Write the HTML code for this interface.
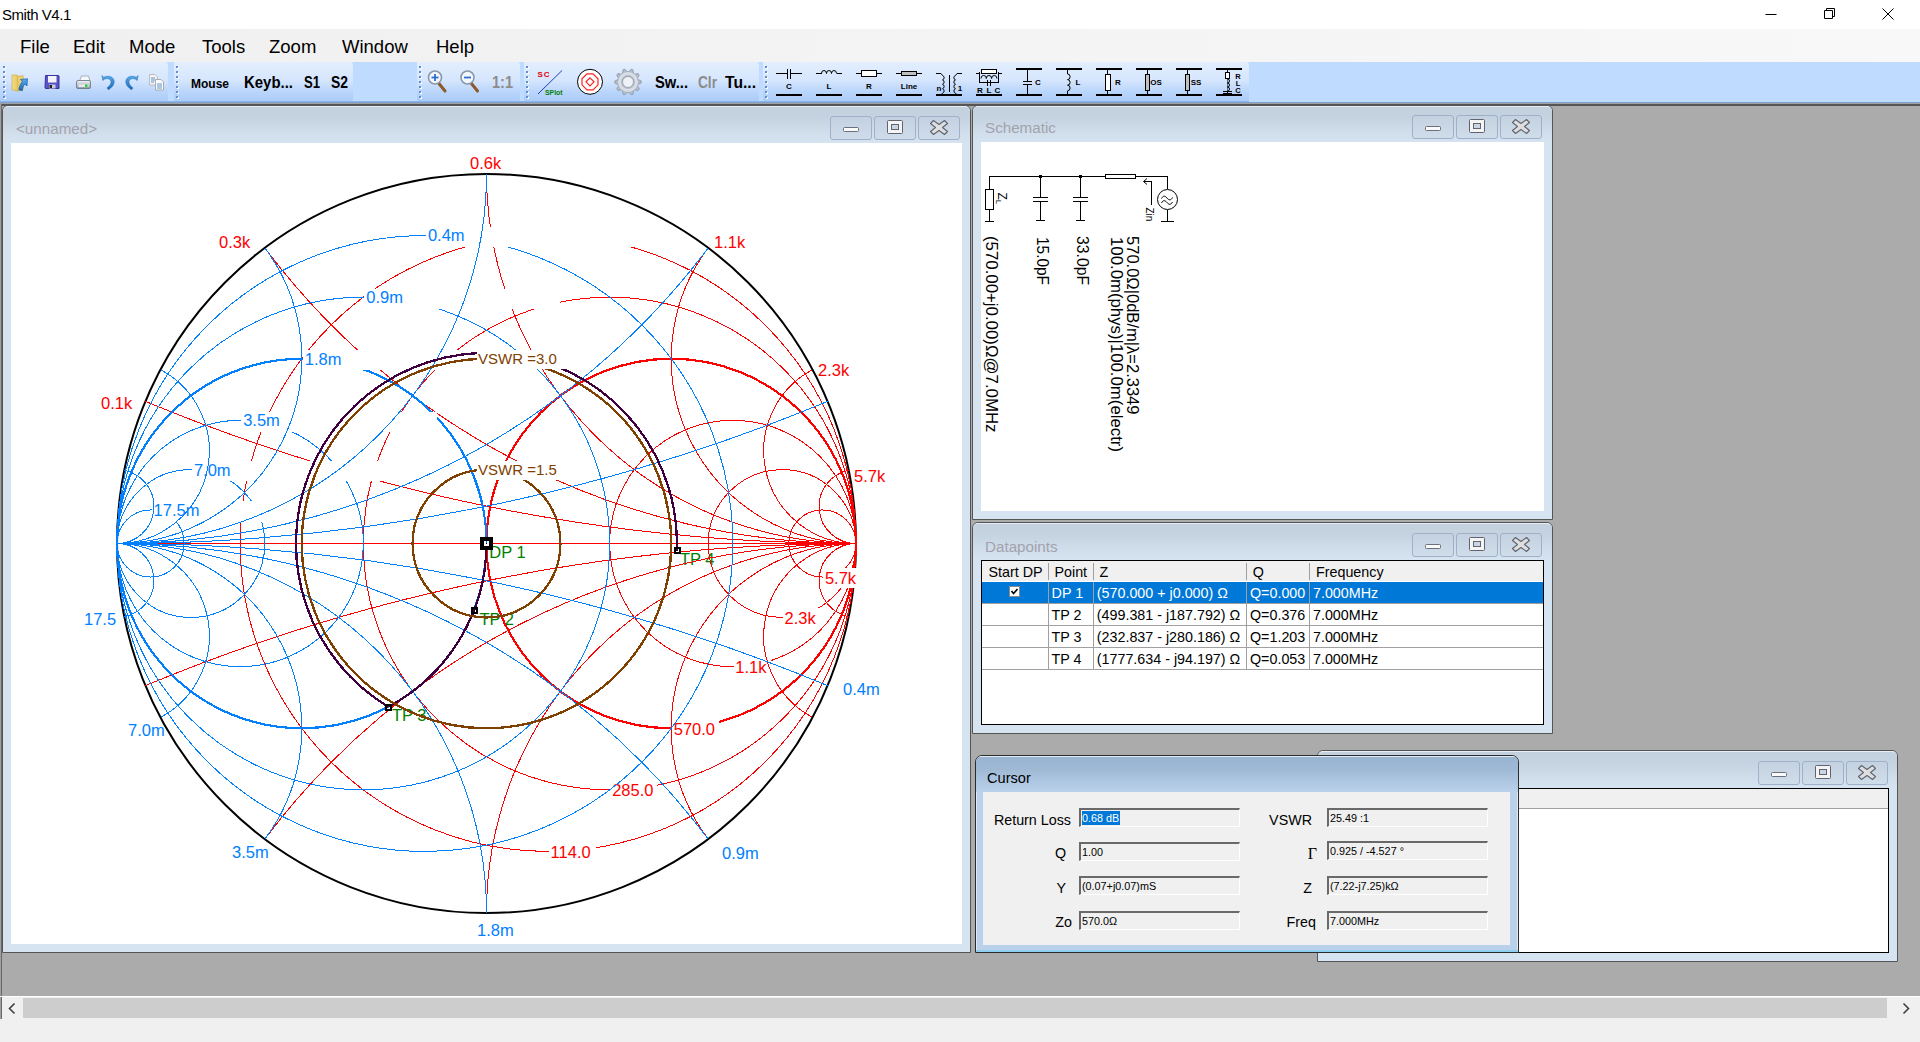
<!DOCTYPE html>
<html><head><meta charset="utf-8"><title>Smith V4.1</title>
<style>
*{box-sizing:border-box;margin:0;padding:0}
html,body{width:1920px;height:1042px;overflow:hidden;background:#fff;font-family:"Liberation Sans",sans-serif;color:#000}
.abs{position:absolute}
#titlebar{position:absolute;left:0;top:0;width:1920px;height:29px;background:#fff}
#titlebar .t{position:absolute;left:2px;top:5px;font-size:15px;line-height:20px;letter-spacing:-0.45px}
#menubar{position:absolute;left:0;top:29px;width:1920px;height:33px;background:linear-gradient(90deg,#f0f0f0 0%,#f2f2f2 30%,#f8f8f8 100%)}
#menubar span{position:absolute;top:6px;font-size:18.5px;line-height:24px}
#toolbar{position:absolute;left:0;top:62px;width:1920px;height:41px;background:#bfdbff}
.band{position:absolute;top:0;height:40px;background:linear-gradient(#e3efff 0%,#d6e6fd 45%,#b9d5fb 75%,#a9cbf8 100%);border-radius:0 3px 3px 0}
.grip{position:absolute;top:5px;width:3px;height:30px;background:repeating-linear-gradient(#5f8fd0 0,#5f8fd0 2px,transparent 2px,transparent 4px)}
.tbt{position:absolute;font-weight:bold;font-size:14.5px;line-height:18px;top:11px;color:#000}
#mdi{position:absolute;left:0;top:103px;width:1920px;height:893px;background:#ababab;border-top:1px solid #a0a0a0;border-left:1px solid #a0a0a0}
#mdi:before{content:"";position:absolute;left:0;top:0;right:0;height:2px;background:#555}
#mdi:after{content:"";position:absolute;left:0;top:0;bottom:0;width:1px;background:#696969}
.win{position:absolute;background:#d6e3f1;border:1px solid #555;border-radius:6px 6px 0 0;overflow:hidden}
.win .tb{position:absolute;left:0;top:0;right:0;height:37px;background:linear-gradient(#c3d0de 0%,#c5d2e0 30%,#d0ddeb 70%,#d6e3f1 100%);border-top:1px solid #e8eef6;border-radius:5px 5px 0 0}
.win .ttl{position:absolute;left:13px;top:13px;font-size:15.2px;line-height:20px;color:#a3a3ad}
.win .cl{position:absolute;background:#fff}
.cb{position:absolute;width:42px;height:24px;border:1px solid #9fb0c8;border-radius:3px;background:linear-gradient(#c4d1e0,#cfdcea)}
.cb svg{position:absolute;left:0;top:0}
#hscroll{position:absolute;left:0;top:996px;width:1920px;height:23px;background:#f0f0f0;border-top:1px solid #fff}
#hscroll .th{position:absolute;left:23px;top:1px;width:1864px;height:20px;background:#cdcdcd}
#status{position:absolute;left:0;top:1019px;width:1920px;height:23px;background:#f0f0f0}
table.lv{border-collapse:collapse;position:absolute;left:0;top:0;font-size:14.5px}
.lvc{position:absolute;font-size:14.3px;line-height:19px;white-space:nowrap}
.fld{position:absolute;height:19px;width:161px;border-top:2px solid #696969;border-left:2px solid #696969;border-right:1px solid #fff;border-bottom:1px solid #fff;box-shadow:inset 0 0 0 0 #000;background:#f0f0f0;font-size:10.8px;line-height:15px;padding:0.5px 0 0 1px;white-space:nowrap}
.lab{position:absolute;font-size:14.3px;line-height:18px;white-space:nowrap;text-align:right}
</style></head><body>
<div id="titlebar"><div class="t">Smith V4.1</div>
<svg class="abs" style="left:1750px;top:0" width="170" height="29" fill="none" stroke="#000" stroke-width="1"><path d="M15.5 14.5h11"/><path d="M74.5 10.5h8v8h-8zM76.500 10.500v-2h8v8h-2"/><path d="M132.5 8.500l11 11m0-11l-11 11"/></svg>
</div>
<div id="menubar"><span style="left:20px">File</span><span style="left:73px">Edit</span><span style="left:129px">Mode</span><span style="left:202px">Tools</span><span style="left:269px">Zoom</span><span style="left:342px">Window</span><span style="left:436px">Help</span></div>
<div id="toolbar">
<div class="band" style="left:0px;width:168px"></div>
<div class="band" style="left:174px;width:179px"></div>
<div class="band" style="left:417px;width:103px"></div>
<div class="band" style="left:524px;width:235px"></div>
<div class="band" style="left:763px;width:486px"></div>
<div style="position:absolute;left:0;top:39px;width:1249px;height:1px;background:#8db3ea"></div>
<div style="position:absolute;left:0;top:40px;width:1920px;height:1px;background:#7da2ce"></div>
<svg class="abs" style="left:0;top:0" width="1920" height="41" font-family="Liberation Sans,sans-serif">
<defs><linearGradient id="gy" x1="0" y1="0" x2="1" y2="0"><stop offset="0" stop-color="#f3dc8b"/><stop offset="1" stop-color="#d9b23c"/></linearGradient><linearGradient id="gb" x1="0" y1="0" x2="0" y2="1"><stop offset="0" stop-color="#5aaef0"/><stop offset="1" stop-color="#1668b8"/></linearGradient><linearGradient id="gs" x1="0" y1="0" x2="0" y2="1"><stop offset="0" stop-color="#f4f6fa"/><stop offset="1" stop-color="#8f98a8"/></linearGradient><radialGradient id="gg"><stop offset="0.5" stop-color="#e8ecf2"/><stop offset="1" stop-color="#9aa4b4"/></radialGradient></defs>
<rect x="4" y="5" width="2" height="2" fill="#fff"/><rect x="3" y="4" width="2" height="2" fill="#5f8fd0"/>
<rect x="4" y="10" width="2" height="2" fill="#fff"/><rect x="3" y="9" width="2" height="2" fill="#5f8fd0"/>
<rect x="4" y="15" width="2" height="2" fill="#fff"/><rect x="3" y="14" width="2" height="2" fill="#5f8fd0"/>
<rect x="4" y="20" width="2" height="2" fill="#fff"/><rect x="3" y="19" width="2" height="2" fill="#5f8fd0"/>
<rect x="4" y="25" width="2" height="2" fill="#fff"/><rect x="3" y="24" width="2" height="2" fill="#5f8fd0"/>
<rect x="4" y="30" width="2" height="2" fill="#fff"/><rect x="3" y="29" width="2" height="2" fill="#5f8fd0"/>
<rect x="4" y="35" width="2" height="2" fill="#fff"/><rect x="3" y="34" width="2" height="2" fill="#5f8fd0"/>
<rect x="177" y="5" width="2" height="2" fill="#fff"/><rect x="176" y="4" width="2" height="2" fill="#5f8fd0"/>
<rect x="177" y="10" width="2" height="2" fill="#fff"/><rect x="176" y="9" width="2" height="2" fill="#5f8fd0"/>
<rect x="177" y="15" width="2" height="2" fill="#fff"/><rect x="176" y="14" width="2" height="2" fill="#5f8fd0"/>
<rect x="177" y="20" width="2" height="2" fill="#fff"/><rect x="176" y="19" width="2" height="2" fill="#5f8fd0"/>
<rect x="177" y="25" width="2" height="2" fill="#fff"/><rect x="176" y="24" width="2" height="2" fill="#5f8fd0"/>
<rect x="177" y="30" width="2" height="2" fill="#fff"/><rect x="176" y="29" width="2" height="2" fill="#5f8fd0"/>
<rect x="177" y="35" width="2" height="2" fill="#fff"/><rect x="176" y="34" width="2" height="2" fill="#5f8fd0"/>
<rect x="420" y="5" width="2" height="2" fill="#fff"/><rect x="419" y="4" width="2" height="2" fill="#5f8fd0"/>
<rect x="420" y="10" width="2" height="2" fill="#fff"/><rect x="419" y="9" width="2" height="2" fill="#5f8fd0"/>
<rect x="420" y="15" width="2" height="2" fill="#fff"/><rect x="419" y="14" width="2" height="2" fill="#5f8fd0"/>
<rect x="420" y="20" width="2" height="2" fill="#fff"/><rect x="419" y="19" width="2" height="2" fill="#5f8fd0"/>
<rect x="420" y="25" width="2" height="2" fill="#fff"/><rect x="419" y="24" width="2" height="2" fill="#5f8fd0"/>
<rect x="420" y="30" width="2" height="2" fill="#fff"/><rect x="419" y="29" width="2" height="2" fill="#5f8fd0"/>
<rect x="420" y="35" width="2" height="2" fill="#fff"/><rect x="419" y="34" width="2" height="2" fill="#5f8fd0"/>
<rect x="527" y="5" width="2" height="2" fill="#fff"/><rect x="526" y="4" width="2" height="2" fill="#5f8fd0"/>
<rect x="527" y="10" width="2" height="2" fill="#fff"/><rect x="526" y="9" width="2" height="2" fill="#5f8fd0"/>
<rect x="527" y="15" width="2" height="2" fill="#fff"/><rect x="526" y="14" width="2" height="2" fill="#5f8fd0"/>
<rect x="527" y="20" width="2" height="2" fill="#fff"/><rect x="526" y="19" width="2" height="2" fill="#5f8fd0"/>
<rect x="527" y="25" width="2" height="2" fill="#fff"/><rect x="526" y="24" width="2" height="2" fill="#5f8fd0"/>
<rect x="527" y="30" width="2" height="2" fill="#fff"/><rect x="526" y="29" width="2" height="2" fill="#5f8fd0"/>
<rect x="527" y="35" width="2" height="2" fill="#fff"/><rect x="526" y="34" width="2" height="2" fill="#5f8fd0"/>
<rect x="766" y="5" width="2" height="2" fill="#fff"/><rect x="765" y="4" width="2" height="2" fill="#5f8fd0"/>
<rect x="766" y="10" width="2" height="2" fill="#fff"/><rect x="765" y="9" width="2" height="2" fill="#5f8fd0"/>
<rect x="766" y="15" width="2" height="2" fill="#fff"/><rect x="765" y="14" width="2" height="2" fill="#5f8fd0"/>
<rect x="766" y="20" width="2" height="2" fill="#fff"/><rect x="765" y="19" width="2" height="2" fill="#5f8fd0"/>
<rect x="766" y="25" width="2" height="2" fill="#fff"/><rect x="765" y="24" width="2" height="2" fill="#5f8fd0"/>
<rect x="766" y="30" width="2" height="2" fill="#fff"/><rect x="765" y="29" width="2" height="2" fill="#5f8fd0"/>
<rect x="766" y="35" width="2" height="2" fill="#fff"/><rect x="765" y="34" width="2" height="2" fill="#5f8fd0"/>
<path d="M12 13h5l1 1.500h5v13l-5 1.500-6-1z" fill="url(#gy)" stroke="#c9a43a" stroke-width=".6"/><path d="M17.500 14.500l5.500-1v13.500l-5 1.500z" fill="#e9cf73" stroke="#c9a43a" stroke-width=".5"/>
<path d="M20.500 17.500l7-.8-.5 7.300-2-2c-1.500 1.500-2.500 3.500-2.700 6.700l-3.500-1c.5-3.500 2-6.500 3.700-8.300z" fill="url(#gb)" stroke="#0f4f9a" stroke-width=".6"/>
<path d="M45.500 13.500h13l.5.500v12.500h-13.500l-.5-.5z" fill="#5a52c8" stroke="#3a3399" stroke-width="1"/><rect x="48" y="14" width="8.500" height="6.500" fill="#f2f2f8"/><rect x="49" y="22.500" width="6.500" height="4" fill="#c9c9d8"/><rect x="49.500" y="23" width="2.500" height="3" fill="#222"/>
<path d="M79.500 19l2-5h7l1.500 5z" fill="#f6f7f9" stroke="#8a93a3" stroke-width=".7"/><rect x="76.500" y="18.500" width="14" height="8" rx="1.500" fill="url(#gs)" stroke="#66707f" stroke-width=".8"/><rect x="78.500" y="22.500" width="10" height="2.500" fill="#e7ebf0"/><rect x="85" y="22.500" width="2.500" height="2.500" fill="#22d422"/>
<path d="M102 13.500l.8 5 1.600-1.300c3.500-1.500 6.600 0 6.600 3 0 2-1.700 3.800-4 5.800l1.600 1.800c3.500-2.600 5.600-5 5.600-8 0-4.800-5.500-7-10.500-4.500z" fill="url(#gb)" stroke="#1c66b0" stroke-width=".5"/>
<path d="M138 13.500l-.8 5-1.600-1.300c-3.500-1.500-6.600 0-6.600 3 0 2 1.700 3.800 4 5.800l-1.600 1.800c-3.500-2.600-5.600-5-5.600-8 0-4.800 5.500-7 10.500-4.500z" fill="url(#gb)" stroke="#1c66b0" stroke-width=".5"/>
<path d="M149.500 12.500h5.500l2.500 2.500v8h-8z" fill="#f4f4f4" stroke="#b0b0b0" stroke-width=".8"/><path d="M155.500 17.500h5.500l2.500 2.500v8h-8z" fill="#fafafa" stroke="#9a9a9a" stroke-width=".8"/>
<path d="M151 16h4m-4 2h4m-4 2h3M157 22h5m-5 2h5m-5 2h5" stroke="#3a78c8" stroke-width=".8"/>
<text x="191" y="25.500" font-size="12" font-weight="bold" textLength="38" lengthAdjust="spacingAndGlyphs">Mouse</text>
<text x="244" y="26.300" font-size="16" font-weight="bold" textLength="49" lengthAdjust="spacingAndGlyphs">Keyb...</text>
<text x="304" y="26.300" font-size="16" font-weight="bold" textLength="16" lengthAdjust="spacingAndGlyphs">S1</text>
<text x="331" y="26.300" font-size="16" font-weight="bold" textLength="17" lengthAdjust="spacingAndGlyphs">S2</text>
<path d="M438.5 21l6.500 8" stroke="#8a5a2a" stroke-width="3" stroke-linecap="round"/>
<circle cx="435" cy="15.500" r="6.500" fill="#f2f7fd" stroke="#8a97a8" stroke-width="1.600"/>
<path d="M431.5 15.500h7" stroke="#2f6fd0" stroke-width="1.800"/>
<path d="M435 12v7" stroke="#2f6fd0" stroke-width="1.800"/>
<path d="M471.0 21l6.500 8" stroke="#8a5a2a" stroke-width="3" stroke-linecap="round"/>
<circle cx="467.5" cy="15.500" r="6.500" fill="#f2f7fd" stroke="#8a97a8" stroke-width="1.600"/>
<path d="M464.0 15.500h7" stroke="#2f6fd0" stroke-width="1.800"/>
<text x="492" y="26.300" font-size="16" font-weight="bold" fill="#8c8c8c" textLength="21" lengthAdjust="spacingAndGlyphs">1:1</text>
<path d="M538 32l24-23.500" stroke="#2040c0" stroke-width="1"/>
<text x="537.500" y="14.500" font-size="8" font-weight="bold" fill="#e00000" letter-spacing="1">SC</text>
<text x="545" y="32.500" font-size="7.500" font-weight="bold" fill="#008000" textLength="17.500" lengthAdjust="spacingAndGlyphs">SPlot</text>
<circle cx="590" cy="19.800" r="12.500" fill="#fff" stroke="#000" stroke-width="1"/>
<path d="M587 11.800h6l5 5v6l-5 5h-6l-5-5v-6z" fill="none" stroke="#ff2020" stroke-width="1.200"/><path d="M590 15.800l4 4-4 4-4-4z" fill="none" stroke="#ff2020" stroke-width="1.200"/>
<path d="M641.2 18.9L641.2 21.0L638.0 22.4L637.5 23.9L639.3 26.9L638.0 28.6L634.7 27.8L633.4 28.8L633.1 32.2L631.1 32.8L628.8 30.3L627.2 30.3L624.9 32.8L623.0 32.2L622.6 28.8L621.3 27.8L618.0 28.6L616.8 26.9L618.5 24.0L618.0 22.4L614.8 21.1L614.8 19.0L618.0 17.6L618.5 16.1L616.7 13.1L618.0 11.4L621.3 12.2L622.6 11.2L622.9 7.8L624.9 7.2L627.2 9.7L628.8 9.7L631.1 7.2L633.0 7.8L633.4 11.2L634.7 12.2L638.0 11.4L639.2 13.1L637.5 16.0L638.0 17.6z" fill="#b4bcc8" stroke="#8d97a6" stroke-width=".8"/>
<circle cx="628" cy="20" r="8.500" fill="none" stroke="#d9dee6" stroke-width="3"/><circle cx="628" cy="20" r="5.500" fill="#eef2f8" stroke="#8d97a6" stroke-width=".8"/>
<text x="655" y="26.300" font-size="16" font-weight="bold" textLength="33" lengthAdjust="spacingAndGlyphs">Sw...</text>
<text x="698" y="26.300" font-size="16" font-weight="bold" fill="#8c8c8c" textLength="19" lengthAdjust="spacingAndGlyphs">Clr</text>
<text x="725" y="26.300" font-size="16" font-weight="bold" textLength="31" lengthAdjust="spacingAndGlyphs">Tu...</text>
<g shape-rendering="crispEdges" stroke="#000" fill="none" font-weight="bold" font-size="8">
<path d="M776 33h26" stroke-width="2"/>
<path d="M816 33h26" stroke-width="2"/>
<path d="M856 33h26" stroke-width="2"/>
<path d="M896 33h26" stroke-width="2"/>
<path d="M936 33h26" stroke-width="2"/>
<path d="M976 33h26" stroke-width="2"/>
<path d="M1016 33h26" stroke-width="2"/>
<path d="M1016 7h26" stroke-width="2"/>
<path d="M1056 33h26" stroke-width="2"/>
<path d="M1056 7h26" stroke-width="2"/>
<path d="M1096 33h26" stroke-width="2"/>
<path d="M1096 7h26" stroke-width="2"/>
<path d="M1136 33h26" stroke-width="2"/>
<path d="M1136 7h26" stroke-width="2"/>
<path d="M1176 33h26" stroke-width="2"/>
<path d="M1176 7h26" stroke-width="2"/>
<path d="M1216 33h26" stroke-width="2"/>
<path d="M1216 7h26" stroke-width="2"/>
<path d="M776 11.500h11m3 0h12M787.5 7v10m3-10v10"/>
<text x="789" y="27" stroke="none" fill="#000" text-anchor="middle">C</text>
<path d="M816 11.500h5.500m15 0h5.500" /><path d="M821.5 11.500a2.500 3 0 0 1 5 0a2.500 3 0 0 1 5 0a2.500 3 0 0 1 5 0" shape-rendering="auto"/>
<text x="829" y="27" stroke="none" fill="#000" text-anchor="middle">L</text>
<path d="M856 11.500h5m16 0h5"/><rect x="861.5" y="8.500" width="15" height="6" fill="#fff"/>
<text x="869" y="27" stroke="none" fill="#000" text-anchor="middle">R</text>
<path d="M896 11.500h5m16 0h5"/><rect x="901.5" y="9.500" width="15" height="4" fill="#c0c0c0"/>
<text x="909" y="27" stroke="none" fill="#000" text-anchor="middle">Line</text>
<g shape-rendering="auto"><path d="M936 11.500h5l1.500 2a2.300 2.300 0 0 1 0 4.400a2.300 2.300 0 0 1 0 4.400a2.300 2.300 0 0 1 0 4.400a2.300 2.300 0 0 1 0 4.400l-2 2.400"/>
<path d="M962 11.500h-5l-1.500 2a2.300 2.300 0 0 0 0 4.400a2.300 2.300 0 0 0 0 4.400a2.300 2.300 0 0 0 0 4.400a2.300 2.300 0 0 0 0 4.400l2 2.400"/></g>
<path d="M949.5 13v17" stroke-width="1"/>
<text x="939" y="28.5" stroke="none" fill="#000" text-anchor="middle">n</text>
<text x="960" y="28.5" stroke="none" fill="#000" text-anchor="middle">1</text>
<path d="M976 11.500h3.500m19 0h3.500M979.5 9.500v11h19v-11"/>
<rect x="981.5" y="7.500" width="15" height="4" fill="#fff"/>
<path d="M981 16.500a2.600 3 0 0 1 5.300 0a2.600 3 0 0 1 5.300 0a2.600 3 0 0 1 5.300 0" shape-rendering="auto"/>
<path d="M987.5 18v6m3-6v6"/>
<text x="980" y="31" stroke="none" fill="#000" text-anchor="middle">R</text>
<text x="989" y="31" stroke="none" fill="#000" text-anchor="middle">L</text>
<text x="997.5" y="31" stroke="none" fill="#000" text-anchor="middle">C</text>
<path d="M1027.5 8v11m0 3v11M1023 19.500h9m-9 3h9"/>
<text x="1038" y="23.3" stroke="none" fill="#000" text-anchor="middle">C</text>
<path d="M1067.5 8v4m0 17v4"/><path d="M1067.5 12a2.600 2.800 0 0 1 0 5.600a2.600 2.800 0 0 1 0 5.600a2.600 2.800 0 0 1 0 5.600" shape-rendering="auto"/>
<text x="1078" y="23.3" stroke="none" fill="#000" text-anchor="middle">L</text>
<path d="M1107.5 8v25"/><rect x="1105.5" y="12.500" width="5" height="16" fill="#fff"/>
<text x="1118" y="23.3" stroke="none" fill="#000" text-anchor="middle">R</text>
<path d="M1147.5 8v25"/><rect x="1145.5" y="12.500" width="4" height="16" fill="#c0c0c0"/>
<text x="1156" y="23.3" stroke="none" fill="#000" text-anchor="middle">OS</text>
<path d="M1187.5 8v25"/><rect x="1185.5" y="12.500" width="4" height="16" fill="#c0c0c0"/>
<text x="1196" y="23.3" stroke="none" fill="#000" text-anchor="middle">SS</text>
<path d="M1227.5 8v25"/><rect x="1225.5" y="10.500" width="4" height="6" fill="#fff"/>
<path d="M1227.5 17a2 2 0 0 1 0 4a2 2 0 0 1 0 4a2 2 0 0 1 0 4" shape-rendering="auto" stroke="#000" fill="#bfd6fb"/>
<path d="M1223 29.500h9m-9 2h9"/>
<text x="1238" y="17" stroke="none" fill="#000" text-anchor="middle" font-size="7.500">R</text>
<text x="1238" y="24" stroke="none" fill="#000" text-anchor="middle" font-size="7.500">L</text>
<text x="1238" y="31" stroke="none" fill="#000" text-anchor="middle" font-size="7.500">C</text>
</g>
</svg>
</div>
<div id="mdi"></div>

<!-- window 1: smith chart -->
<div class="win" style="left:2px;top:105px;width:969px;height:848px">
 <div class="tb"></div><div class="ttl">&lt;unnamed&gt;</div>
 <div class="cb" style="left:827px;top:10px"><svg width="40" height="22"><rect x="12.5" y="10.5" width="15" height="4" rx="1" fill="#fafafa" stroke="#6a6f7a"/></svg></div><div class="cb" style="left:871px;top:10px"><svg width="40" height="22"><rect x="12.5" y="3.5" width="15" height="13" rx="1" fill="#f4f4f4" stroke="#5f6470" stroke-width="1"/><rect x="16.5" y="7.500" width="7" height="5" fill="#c9d5e3" stroke="#5f6470"/></svg></div><div class="cb" style="left:915px;top:10px"><svg width="40" height="22"><path d="M14.5 3.500l5.500 4 5.500-4 3 3-5 4 5 4-3 3-5.500-4-5.500 4-3-3 5-4-5-4z" fill="#dedede" stroke="#5f6470" stroke-width="1.100" stroke-linejoin="round"/></svg></div>
 <div class="cl" style="left:8px;top:37px;width:951px;height:801px"></div>
</div>
<svg class="abs" style="left:10px;top:142px" width="952" height="802" viewBox="10 142 952 802" fill="none" font-family="Liberation Sans,sans-serif" font-size="16.5" shape-rendering="crispEdges">
<text x="101" y="408.7" fill="#ff0000">0.1k</text>
<text x="219" y="247.7" fill="#ff0000">0.3k</text>
<text x="470" y="168.7" fill="#ff0000">0.6k</text>
<text x="714" y="247.7" fill="#ff0000">1.1k</text>
<text x="818" y="375.7" fill="#ff0000">2.3k</text>
<text x="854" y="481.7" fill="#ff0000">5.7k</text>
<text x="84" y="624.7" fill="#0080ff">17.5</text>
<text x="128" y="735.7" fill="#0080ff">7.0m</text>
<text x="232" y="857.7" fill="#0080ff">3.5m</text>
<text x="477" y="935.7" fill="#0080ff">1.8m</text>
<text x="722" y="858.7" fill="#0080ff">0.9m</text>
<text x="843" y="694.7" fill="#0080ff">0.4m</text>
<circle cx="486.5" cy="543.5" r="369.5" fill="#fff" stroke="#000" stroke-width="2" shape-rendering="auto"/>
<text x="489.3" y="557.5" fill="#008000">DP 1</text>
<text x="479.5" y="625" fill="#008000">TP 2</text>
<text x="392" y="721" fill="#008000">TP 3</text>
<text x="680" y="565" fill="#008000">TP 4</text>
<circle cx="548.08" cy="543.5" r="307.92" stroke="#ff0000" stroke-width="1"/>
<rect x="549.08" y="841.92" width="46.5" height="20" fill="#fff"/>
<text x="550.58" y="857.92" fill="#ff0000">114.0</text>
<circle cx="609.67" cy="543.5" r="246.33" stroke="#ff0000" stroke-width="1"/>
<rect x="610.67" y="780.33" width="46.5" height="20" fill="#fff"/>
<text x="612.17" y="796.33" fill="#ff0000">285.0</text>
<circle cx="671.25" cy="543.5" r="184.75" stroke="#ff0000" stroke-width="2.2"/>
<rect x="672.25" y="718.75" width="46.5" height="20" fill="#fff"/>
<text x="673.75" y="734.75" fill="#ff0000">570.0</text>
<circle cx="732.83" cy="543.5" r="123.17" stroke="#ff0000" stroke-width="1"/>
<rect x="733.83" y="657.17" width="37.3" height="20" fill="#fff"/>
<text x="735.33" y="673.17" fill="#ff0000">1.1k</text>
<circle cx="782.1" cy="543.5" r="73.9" stroke="#ff0000" stroke-width="1"/>
<rect x="783.1" y="607.9" width="37.3" height="20" fill="#fff"/>
<text x="784.6" y="623.9" fill="#ff0000">2.3k</text>
<circle cx="822.41" cy="543.5" r="33.59" stroke="#ff0000" stroke-width="1"/>
<rect x="823.41" y="567.59" width="37.3" height="20" fill="#fff"/>
<text x="824.91" y="583.59" fill="#ff0000">5.7k</text>
<path d="M856 543.5A1847.5 1847.5 0 0 1 145.42 401.38" stroke="#ff0000" stroke-width="1"/>
<path d="M856 543.5A1847.5 1847.5 0 0 0 145.42 685.62" stroke="#ff0000" stroke-width="1"/>
<path d="M856 543.5A739 739 0 0 1 264.8 247.9" stroke="#ff0000" stroke-width="1"/>
<path d="M856 543.5A739 739 0 0 0 264.8 839.1" stroke="#ff0000" stroke-width="1"/>
<path d="M856 543.5A369.5 369.5 0 0 1 486.5 174" stroke="#ff0000" stroke-width="1"/>
<path d="M856 543.5A369.5 369.5 0 0 0 486.5 913" stroke="#ff0000" stroke-width="1"/>
<path d="M856 543.5A184.75 184.75 0 0 1 708.2 247.9" stroke="#ff0000" stroke-width="1"/>
<path d="M856 543.5A184.75 184.75 0 0 0 708.2 839.1" stroke="#ff0000" stroke-width="1"/>
<path d="M856 543.5A92.38 92.38 0 0 1 812.53 369.62" stroke="#ff0000" stroke-width="1"/>
<path d="M856 543.5A92.38 92.38 0 0 0 812.53 717.38" stroke="#ff0000" stroke-width="1"/>
<path d="M856 543.5A36.95 36.95 0 0 1 848.68 470.33" stroke="#ff0000" stroke-width="1"/>
<path d="M856 543.5A36.95 36.95 0 0 0 848.68 616.67" stroke="#ff0000" stroke-width="1"/>
<path d="M117 543.5H856" stroke="#ff0000" stroke-width="1"/>
<circle cx="424.92" cy="543.5" r="307.92" stroke="#0080ff" stroke-width="1"/>
<circle cx="363.33" cy="543.5" r="246.33" stroke="#0080ff" stroke-width="1"/>
<circle cx="301.75" cy="543.5" r="184.75" stroke="#0080ff" stroke-width="2.2"/>
<circle cx="240.17" cy="543.5" r="123.17" stroke="#0080ff" stroke-width="1"/>
<circle cx="190.9" cy="543.5" r="73.9" stroke="#0080ff" stroke-width="1"/>
<circle cx="150.59" cy="543.5" r="33.59" stroke="#0080ff" stroke-width="1"/>
<rect x="425.92" y="227.08" width="206" height="20.1" fill="#fff"/>
<text x="427.92" y="241.48" fill="#0080ff">0.4m</text>
<rect x="364.33" y="288.67" width="196" height="20.1" fill="#fff"/>
<text x="366.33" y="303.07" fill="#0080ff">0.9m</text>
<rect x="302.75" y="350.25" width="196" height="20.1" fill="#fff"/>
<text x="304.75" y="364.65" fill="#0080ff">1.8m</text>
<rect x="241.17" y="411.83" width="196" height="20.1" fill="#fff"/>
<text x="243.17" y="426.23" fill="#0080ff">3.5m</text>
<rect x="191.9" y="461.1" width="196" height="20.1" fill="#fff"/>
<text x="193.9" y="475.5" fill="#0080ff">7.0m</text>
<rect x="151.59" y="501.41" width="196" height="20.1" fill="#fff"/>
<text x="153.59" y="515.81" fill="#0080ff">17.5m</text>
<path d="M117 543.5A1847.5 1847.5 0 0 1 827.58 685.62" stroke="#0080ff" stroke-width="1"/>
<path d="M117 543.5A1847.5 1847.5 0 0 0 827.58 401.38" stroke="#0080ff" stroke-width="1"/>
<path d="M117 543.5A739 739 0 0 1 708.2 839.1" stroke="#0080ff" stroke-width="1"/>
<path d="M117 543.5A739 739 0 0 0 708.2 247.9" stroke="#0080ff" stroke-width="1"/>
<path d="M117 543.5A369.5 369.5 0 0 1 486.5 913" stroke="#0080ff" stroke-width="1"/>
<path d="M117 543.5A369.5 369.5 0 0 0 486.5 174" stroke="#0080ff" stroke-width="1"/>
<path d="M117 543.5A184.75 184.75 0 0 1 264.8 839.1" stroke="#0080ff" stroke-width="1"/>
<path d="M117 543.5A184.75 184.75 0 0 0 264.8 247.9" stroke="#0080ff" stroke-width="1"/>
<path d="M117 543.5A92.38 92.38 0 0 1 160.47 717.38" stroke="#0080ff" stroke-width="1"/>
<path d="M117 543.5A92.38 92.38 0 0 0 160.47 369.62" stroke="#0080ff" stroke-width="1"/>
<path d="M117 543.5A36.95 36.95 0 0 1 124.32 616.67" stroke="#0080ff" stroke-width="1"/>
<path d="M117 543.5A36.95 36.95 0 0 0 124.32 470.33" stroke="#0080ff" stroke-width="1"/>
<path d="M486.5 543.5A184.75 184.75 0 0 1 388.29 706.73M388.29 706.73A190.5 190.5 0 1 1 676.86 550.69" stroke="#400040" stroke-width="2.3"/>
<circle cx="486.5" cy="543.5" r="184.75" stroke="#804000" stroke-width="2.3"/>
<circle cx="486.5" cy="543.5" r="73.9" stroke="#804000" stroke-width="2.3"/>
<rect x="476.5" y="349.75" width="89.5" height="19.7" fill="#fff"/>
<text x="478" y="364.15" fill="#804000" font-size="15">VSWR =3.0</text>
<rect x="476.5" y="460.6" width="89.5" height="19.7" fill="#fff"/>
<text x="478" y="475" fill="#804000" font-size="15">VSWR =1.5</text>
<rect x="480" y="537" width="13" height="13" fill="#000"/>
<rect x="484" y="541" width="5" height="5" fill="#fff"/>
<rect x="486" y="541" width="1" height="3" fill="#0080ff"/>
<rect x="486" y="543" width="1" height="1" fill="#000"/>
<rect x="472" y="608" width="5" height="5" fill="none" stroke="#000" stroke-width="2"/>
<rect x="386" y="705" width="5" height="5" fill="none" stroke="#000" stroke-width="2"/>
<rect x="675" y="548" width="5" height="5" fill="none" stroke="#000" stroke-width="2"/>
</svg>

<!-- window 2: schematic -->
<div class="win" style="left:972px;top:105px;width:581px;height:415px">
 <div class="tb"></div><div class="ttl" style="top:12px;left:12px">Schematic</div>
 <div class="cb" style="left:439px;top:9px"><svg width="40" height="22"><rect x="12.5" y="10.5" width="15" height="4" rx="1" fill="#fafafa" stroke="#6a6f7a"/></svg></div><div class="cb" style="left:483px;top:9px"><svg width="40" height="22"><rect x="12.5" y="3.5" width="15" height="13" rx="1" fill="#f4f4f4" stroke="#5f6470" stroke-width="1"/><rect x="16.5" y="7.500" width="7" height="5" fill="#c9d5e3" stroke="#5f6470"/></svg></div><div class="cb" style="left:527px;top:9px"><svg width="40" height="22"><path d="M14.5 3.500l5.500 4 5.500-4 3 3-5 4 5 4-3 3-5.500-4-5.500 4-3-3 5-4-5-4z" fill="#dedede" stroke="#5f6470" stroke-width="1.100" stroke-linejoin="round"/></svg></div>
 <div class="cl" style="left:8px;top:36px;width:563px;height:369px"></div>
</div>
<svg class="abs" style="left:980px;top:141px" width="564" height="370" viewBox="980 141 564 370" fill="none" stroke="#000" stroke-width="1" font-family="Liberation Sans,sans-serif" shape-rendering="crispEdges">
<path d="M989.500 189V176.500H1105M1136 176.500h31.500V189"/>
<rect x="985.500" y="189.500" width="8" height="20" fill="#fff"/>
<path d="M989.500 210v11.500M985 221.500h9"/>
<rect x="1038.500" y="175" width="3" height="3" fill="#000" stroke="none"/><rect x="1078.500" y="175" width="3" height="3" fill="#000" stroke="none"/>
<path d="M1040.500 177v20M1033 197.500h15M1033 201.500h15M1040.500 202v18.500M1036 220.500h9"/>
<path d="M1080.500 177v20M1073 197.500h15M1073 201.500h15M1080.500 202v18.500M1076 220.500h9"/>
<rect x="1105.500" y="174.500" width="30" height="4" fill="#fff"/>
<circle cx="1167.500" cy="199.500" r="10" shape-rendering="auto"/>
<path d="M1161.500 198.500c1.500-3 3.500-3 5.500-.5s4 2.500 5.500-.5M1161.500 203c1.500-3 3.500-3 5.500-.5s4 2.500 5.500-.5" shape-rendering="auto"/>
<path d="M1167.500 210v11.500M1160.500 221.500h13"/>
<path d="M1151.500 205V181.500h-7.500"/><path d="M1147 178.500l-3.500 3 3.500 3" shape-rendering="auto"/>
<g stroke="none" fill="#000">
<text transform="translate(998,192.500) rotate(90)" font-size="12">Z<tspan font-size="8" dy="2.500">L</tspan></text>
<text transform="translate(1146,207.500) rotate(90)" font-size="10">Zin</text>
<g font-size="16">
<text transform="translate(986,236) rotate(90)" textLength="196.500" lengthAdjust="spacingAndGlyphs">(570.00+j0.00)Ω@7.0MHz</text>
<text transform="translate(1037,237) rotate(90)" textLength="48" lengthAdjust="spacingAndGlyphs">15.0pF</text>
<text transform="translate(1077.300,236) rotate(90)" textLength="49" lengthAdjust="spacingAndGlyphs">33.0pF</text>
<text transform="translate(1127.200,236) rotate(90)" textLength="178.500" lengthAdjust="spacingAndGlyphs">570.0Ω|0dB/m|λ=2.3349</text>
<text transform="translate(1111,237) rotate(90)" textLength="215" lengthAdjust="spacingAndGlyphs">100.0m(phys)|100.0m(electr)</text>
</g></g>
</svg>


<!-- window 3: datapoints -->
<div class="win" style="left:972px;top:522px;width:581px;height:212px">
 <div class="tb"></div><div class="ttl" style="left:12px;top:14px">Datapoints</div>
 <div class="cb" style="left:439px;top:10px"><svg width="40" height="22"><rect x="12.5" y="10.5" width="15" height="4" rx="1" fill="#fafafa" stroke="#6a6f7a"/></svg></div><div class="cb" style="left:483px;top:10px"><svg width="40" height="22"><rect x="12.5" y="3.5" width="15" height="13" rx="1" fill="#f4f4f4" stroke="#5f6470" stroke-width="1"/><rect x="16.5" y="7.500" width="7" height="5" fill="#c9d5e3" stroke="#5f6470"/></svg></div><div class="cb" style="left:527px;top:10px"><svg width="40" height="22"><path d="M14.5 3.500l5.500 4 5.500-4 3 3-5 4 5 4-3 3-5.500-4-5.500 4-3-3 5-4-5-4z" fill="#dedede" stroke="#5f6470" stroke-width="1.100" stroke-linejoin="round"/></svg></div>
 <div class="cl" style="left:8px;top:37px;width:563px;height:165px;border:1px solid #000">
<div style="position:absolute;left:0;top:0;right:0;height:20px;background:#f0f0f0"></div>
<div style="position:absolute;left:66px;top:2px;width:1px;height:17px;background:#a0a0a0"></div>
<div style="position:absolute;left:66px;top:21px;width:1px;height:88px;background:#a0a0a0"></div>
<div style="position:absolute;left:111px;top:2px;width:1px;height:17px;background:#a0a0a0"></div>
<div style="position:absolute;left:111px;top:21px;width:1px;height:88px;background:#a0a0a0"></div>
<div style="position:absolute;left:264px;top:2px;width:1px;height:17px;background:#a0a0a0"></div>
<div style="position:absolute;left:264px;top:21px;width:1px;height:88px;background:#a0a0a0"></div>
<div style="position:absolute;left:327px;top:2px;width:1px;height:17px;background:#a0a0a0"></div>
<div style="position:absolute;left:327px;top:21px;width:1px;height:88px;background:#a0a0a0"></div>
<div class="lvc" style="left:6.5px;top:2px">Start DP</div>
<div class="lvc" style="left:72.5px;top:2px">Point</div>
<div class="lvc" style="left:117.5px;top:2px">Z</div>
<div class="lvc" style="left:270.79999999999995px;top:2px">Q</div>
<div class="lvc" style="left:334px;top:2px">Frequency</div>
<div style="position:absolute;left:0;top:21px;right:0;height:21px;background:#0078d7"></div>
<div style="position:absolute;left:66px;top:21px;width:1px;height:21px;background:#a0a0a0"></div>
<div style="position:absolute;left:111px;top:21px;width:1px;height:21px;background:#a0a0a0"></div>
<div style="position:absolute;left:264px;top:21px;width:1px;height:21px;background:#a0a0a0"></div>
<div style="position:absolute;left:327px;top:21px;width:1px;height:21px;background:#a0a0a0"></div>
<div style="position:absolute;left:0;top:42px;right:0;height:1px;background:#a0a0a0"></div>
<div class="lvc" style="left:69.59999999999991px;top:23px;color:#fff">DP 1</div>
<div class="lvc" style="left:114.79999999999995px;top:23px;color:#fff">(570.000 + j0.000) Ω</div>
<div class="lvc" style="left:268px;top:23px;color:#fff">Q=0.000</div>
<div class="lvc" style="left:331px;top:23px;color:#fff">7.000MHz</div>
<div style="position:absolute;left:0;top:64px;right:0;height:1px;background:#a0a0a0"></div>
<div class="lvc" style="left:69.59999999999991px;top:45px;color:#000">TP 2</div>
<div class="lvc" style="left:114.79999999999995px;top:45px;color:#000">(499.381 - j187.792) Ω</div>
<div class="lvc" style="left:268px;top:45px;color:#000">Q=0.376</div>
<div class="lvc" style="left:331px;top:45px;color:#000">7.000MHz</div>
<div style="position:absolute;left:0;top:86px;right:0;height:1px;background:#a0a0a0"></div>
<div class="lvc" style="left:69.59999999999991px;top:67px;color:#000">TP 3</div>
<div class="lvc" style="left:114.79999999999995px;top:67px;color:#000">(232.837 - j280.186) Ω</div>
<div class="lvc" style="left:268px;top:67px;color:#000">Q=1.203</div>
<div class="lvc" style="left:331px;top:67px;color:#000">7.000MHz</div>
<div style="position:absolute;left:0;top:108px;right:0;height:1px;background:#a0a0a0"></div>
<div class="lvc" style="left:69.59999999999991px;top:89px;color:#000">TP 4</div>
<div class="lvc" style="left:114.79999999999995px;top:89px;color:#000">(1777.634 - j94.197) Ω</div>
<div class="lvc" style="left:268px;top:89px;color:#000">Q=0.053</div>
<div class="lvc" style="left:331px;top:89px;color:#000">7.000MHz</div>
<div style="position:absolute;left:27px;top:25px;width:11px;height:11px;background:#fff;border:1px solid #8c8c8c"></div>
<svg style="position:absolute;left:27px;top:25px" width="11" height="11"><path d="M2.500 5l2 2.500 4-4.500" fill="none" stroke="#000" stroke-width="1.600"/></svg>
 </div>
</div>

<!-- window 4: hidden behind cursor -->
<div class="win" style="left:1317px;top:750px;width:581px;height:212px">
 <div class="tb"></div>
 <div class="cb" style="left:440px;top:10px"><svg width="40" height="22"><rect x="12.5" y="10.5" width="15" height="4" rx="1" fill="#fafafa" stroke="#6a6f7a"/></svg></div><div class="cb" style="left:484px;top:10px"><svg width="40" height="22"><rect x="12.5" y="3.5" width="15" height="13" rx="1" fill="#f4f4f4" stroke="#5f6470" stroke-width="1"/><rect x="16.5" y="7.500" width="7" height="5" fill="#c9d5e3" stroke="#5f6470"/></svg></div><div class="cb" style="left:528px;top:10px"><svg width="40" height="22"><path d="M14.5 3.500l5.500 4 5.500-4 3 3-5 4 5 4-3 3-5.500-4-5.500 4-3-3 5-4-5-4z" fill="#dedede" stroke="#5f6470" stroke-width="1.100" stroke-linejoin="round"/></svg></div>
 <div class="cl" style="left:2px;top:37px;width:569px;height:165px;border:1px solid #000"><div style="position:absolute;left:0;top:0;right:0;height:20px;background:#f0f0f0;border-bottom:1px solid #a0a0a0"></div></div>
</div>

<!-- cursor dialog -->
<div style="position:absolute;left:975px;top:755px;width:544px;height:198px;border:1px solid #2b2b2b;border-radius:7px 7px 0 0;background:#b9d1ea;overflow:hidden;box-shadow:inset 0 0 0 1px #dfeaf6">
<div style="position:absolute;left:0;top:0;right:0;height:36px;background:linear-gradient(#99b4d1 0%,#9fb9d5 35%,#b2cae4 80%,#b9d1ea 100%);border-top:1px solid #e3edf7"></div>
<div style="position:absolute;left:0;bottom:0;right:0;height:2px;background:#8fd0f0"></div>
<div style="position:absolute;left:11px;top:12px;font-size:14.6px;line-height:20px">Cursor</div>
<div style="position:absolute;left:7px;top:36px;width:527px;height:153px;background:#f0f0f0"></div>
</div>
<div class="lab" style="left:979px;width:92px;top:811px">Return Loss</div>
<div class="fld" style="left:1079px;top:808px"><span style="background:#0078d7;color:#fff;padding:1px 1px 1px 0">0.68 dB</span></div>
<div class="lab" style="left:980px;width:86px;top:844px">Q</div>
<div class="fld" style="left:1079px;top:842px">1.00</div>
<div class="lab" style="left:980px;width:86px;top:879px">Y</div>
<div class="fld" style="left:1079px;top:876px">(0.07+j0.07)mS</div>
<div class="lab" style="left:980px;width:92px;top:913px">Zo</div>
<div class="fld" style="left:1079px;top:911px">570.0Ω</div>
<div class="lab" style="left:1250px;width:62px;top:811px">VSWR</div>
<div class="fld" style="left:1327px;top:808px">25.49 :1</div>
<div class="lab" style="left:1250px;width:67px;top:845px;font-family:'Liberation Serif',serif;font-size:16px">Γ</div>
<div class="fld" style="left:1327px;top:841px">0.925 / -4.527 °</div>
<div class="lab" style="left:1250px;width:62px;top:879px">Z</div>
<div class="fld" style="left:1327px;top:876px">(7.22-j7.25)kΩ</div>
<div class="lab" style="left:1250px;width:66px;top:913px">Freq</div>
<div class="fld" style="left:1327px;top:911px">7.000MHz</div>

<div id="hscroll"><div style="position:absolute;left:0;top:0;width:1px;height:22px;background:#a0a0a0"></div><div style="position:absolute;left:1px;top:0;width:1px;height:22px;background:#696969"></div><div class="th"></div>
<svg class="abs" style="left:0;top:0" width="1920" height="22" fill="none" stroke="#404040" stroke-width="1.6"><path d="M14.500 6.500l-5 5 5 5"/><path d="M1903.5 6.500l5 5-5 5"/></svg></div>
<div id="status"></div>
</body></html>
